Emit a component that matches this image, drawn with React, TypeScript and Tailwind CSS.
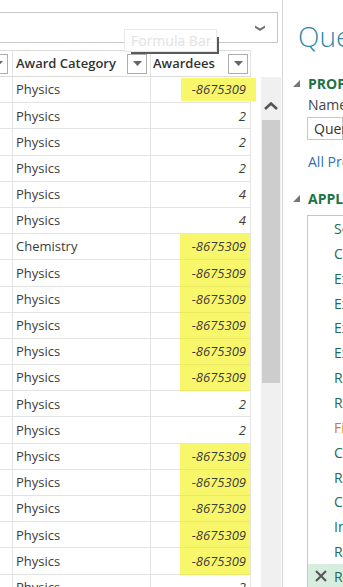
import React from "react";

const rows: [string, string][] = [
  ["Physics", "-8675309"],
  ["Physics", "2"],
  ["Physics", "2"],
  ["Physics", "2"],
  ["Physics", "4"],
  ["Physics", "4"],
  ["Chemistry", "-8675309"],
  ["Physics", "-8675309"],
  ["Physics", "-8675309"],
  ["Physics", "-8675309"],
  ["Physics", "-8675309"],
  ["Physics", "-8675309"],
  ["Physics", "2"],
  ["Physics", "2"],
  ["Physics", "-8675309"],
  ["Physics", "-8675309"],
  ["Physics", "-8675309"],
  ["Physics", "-8675309"],
  ["Physics", "-8675309"],
  ["Physics", "2"],
];

const steps: { name: string; orange?: boolean }[] = [
  { name: "Source" },
  { name: "Changed Type" },
  { name: "Expanded prizes" },
  { name: "Expanded prizes1" },
  { name: "Expanded laureates" },
  { name: "Expanded laureates1" },
  { name: "Renamed Columns" },
  { name: "Removed Columns" },
  { name: "Filtered Rows", orange: true },
  { name: "Changed Type1" },
  { name: "Renamed Columns1" },
  { name: "Changed Type2" },
  { name: "Inserted Text" },
  { name: "Reordered Columns" },
];

function DropBtn({ className = "" }: { className?: string }) {
  return (
    <div
      className={
        "w-[20px] h-[20px] shrink-0 border border-[#adadad] bg-white flex items-center justify-center " +
        className
      }
    >
      <svg width="9" height="5" viewBox="0 0 9 5">
        <path d="M0 0H9L4.5 5Z" fill="#666" />
      </svg>
    </div>
  );
}

function Tri() {
  return (
    <svg width="7" height="7" viewBox="0 0 7 7" className="shrink-0">
      <polygon points="7,0 7,7 0,7" fill="#777" />
    </svg>
  );
}

export default function App() {
  return (
    <div className="w-[343px] h-[587px] overflow-hidden bg-white flex relative font-['Open_Sans',sans-serif]">
      {/* Left pane */}
      <div className="w-[282px] shrink-0 flex flex-col pt-[12px]">
        <div className="ml-[-2px] w-[280px] h-[31px] shrink-0 border border-[#c8c8c8] flex items-center justify-end pr-[12px]">
          <svg width="10" height="6" viewBox="0 0 10 6">
            <path d="M0 0.5L5 3.5L10 0.5V2.8L5 6L0 2.8Z" fill="#707070" />
          </svg>
        </div>
        <div className="mt-[7px] flex">
          {/* Table */}
          <div className="w-[251px] shrink-0 flex flex-col">
            <div className="flex h-[27px] border-t border-b border-[#dcdcdc] text-[13px] font-semibold text-[#333]">
              <div className="w-[13px] shrink-0 border-r border-[#e3e3e3] flex items-center overflow-hidden">
                <DropBtn className="ml-[-12px]" />
              </div>
              <div className="w-[138px] shrink-0 border-r border-[#e3e3e3] flex items-center justify-between pl-[3px] pr-[3px]">
                <span>Award Category</span>
                <DropBtn />
              </div>
              <div className="w-[100px] shrink-0 border-r border-[#e3e3e3] flex items-center justify-between pl-[2px] pr-[2px]">
                <span>Awardees</span>
                <DropBtn />
              </div>
            </div>
            {rows.map(([cat, val], i) => {
              const hl = val.startsWith("-");
              return (
                <div
                  key={i}
                  className="flex h-[26.2px] shrink-0 border-b border-[#e3e3e3] text-[13px] text-[#3c3c3c]"
                >
                  <div className="w-[13px] shrink-0 border-r border-[#e3e3e3]" />
                  <div className="w-[138px] shrink-0 border-r border-[#e3e3e3] flex items-center pl-[3px] pt-[1px]">
                    {cat}
                  </div>
                  <div className="w-[100px] shrink-0 border-r border-[#e3e3e3] flex justify-end items-start">
                    {hl ? (
                      i === 0 ? (
                        <div className="w-[75px] h-[23px] mt-[1px] mr-[-6px] relative bg-[#f8f76b] flex items-center justify-end pr-[10px] italic">
                          {val}
                        </div>
                      ) : (
                        <div className="w-[70px] h-[26.2px] relative bg-[#f8f76b] border-b border-[#ecea62] flex items-center justify-end pr-[4px] pt-[1px] italic">
                          {val}
                        </div>
                      )
                    ) : (
                      <div className="h-full flex items-center pr-[4px] pt-[1px] italic">{val}</div>
                    )}
                  </div>
                </div>
              );
            })}
          </div>
          {/* Scrollbar */}
          <div className="w-[20px] ml-[10px] mt-[27px] shrink-0 flex flex-col bg-[#f0f0f0] h-[520px]">
            <div className="h-[43px] flex items-center justify-center pt-[14px]">
              <svg width="14" height="8" viewBox="0 0 14 8">
                <path d="M1 7L7 1.5L13 7" stroke="#555" strokeWidth="2.6" fill="none" />
              </svg>
            </div>
            <div className="ml-[1px] w-[18px] h-[263px] bg-[#cdcdcd]" />
          </div>
        </div>
      </div>
      <div className="w-[1px] shrink-0 bg-[#d4d4d4]" />
      {/* Right pane */}
      <div className="flex-1 min-w-0 overflow-hidden flex flex-col whitespace-nowrap text-[14px]">
        <div className="mt-[18px] h-[36px] leading-[36px] text-[28px] font-light text-[#2d8aa6] pl-[15px]">
          Query Settings
        </div>
        <div className="mt-[19px] h-[20px] flex items-center pl-[10px]">
          <Tri />
          <span className="ml-[8px] font-bold text-[#217346]">PROPERTIES</span>
        </div>
        <div className="mt-[2px] h-[20px] leading-[20px] pl-[25px] text-[#444]">Name</div>
        <div className="mt-[2px] ml-[24px] h-[24px] border border-[#c6c6c6] flex items-center pl-[6px] text-[#333]">
          Query1
        </div>
        <div className="mt-[12px] h-[20px] leading-[20px] pl-[25px] text-[#2e6fb7]">All Properties</div>
        <div className="mt-[16px] h-[20px] flex items-center pl-[10px]">
          <Tri />
          <span className="ml-[8px] font-bold text-[#217346]">APPLIED STEPS</span>
        </div>
        <div className="mt-[7px] ml-[24px] flex-1 border-l border-t border-[#c6c6c6] flex flex-col">
          {steps.map((s, i) => (
            <div
              key={i}
              className={
                "h-[24.86px] shrink-0 flex items-center pl-[26px] " +
                (s.orange ? "text-[#d37f12]" : "text-[#1f6a5a]")
              }
            >
              {s.name}
            </div>
          ))}
          <div className="h-[24.86px] shrink-0 flex items-center pl-[7px] bg-[#d6ede0] text-[#1f6a5a]">
            <svg width="12" height="12" viewBox="0 0 12 12" className="shrink-0">
              <path d="M1 1L11 11M11 1L1 11" stroke="#555" strokeWidth="2" />
            </svg>
            <span className="ml-[7px]">Replaced Errors</span>
          </div>
        </div>
      </div>
      {/* Tooltip */}
      <div className="absolute left-[131px] top-[37px] w-[88px] h-[17px] border-r-2 border-b-2 border-[#5a5a5a]" />
      <div className="absolute left-[124px] top-[29px] w-[93px] h-[23px] bg-white/85 border border-[#e8e8e8] flex items-center pl-[6px] text-[14px] leading-[20px] text-[#e2e2e2] whitespace-nowrap">
        Formula Bar
      </div>
    </div>
  );
}
